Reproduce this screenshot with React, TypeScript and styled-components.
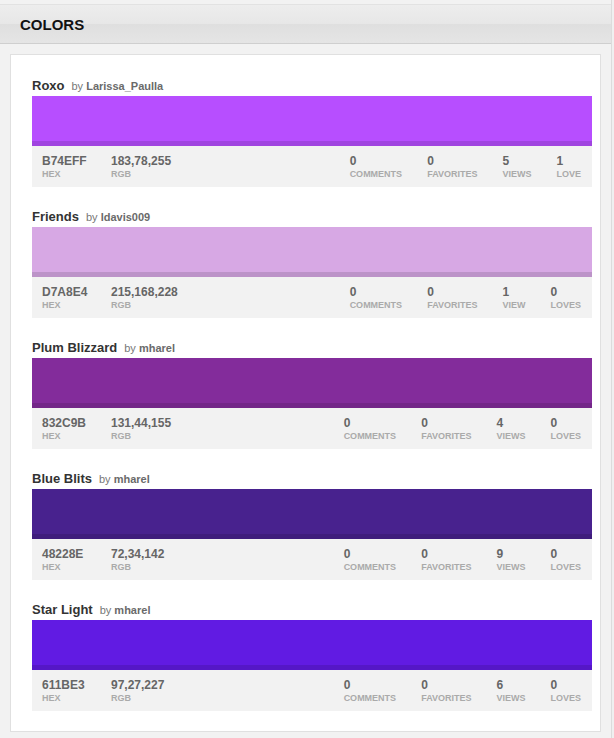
import React from 'react';
import styled, { createGlobalStyle } from 'styled-components';

interface Palette {
  title: string;
  user: string;
  hex: string;
  rgb: string;
  comments: number;
  favorites: number;
  views: number;
  loves: number;
}

const palettes: Palette[] = [
  { title: 'Roxo', user: 'Larissa_Paulla', hex: 'B74EFF', rgb: '183,78,255', comments: 0, favorites: 0, views: 5, loves: 1 },
  { title: 'Friends', user: 'ldavis009', hex: 'D7A8E4', rgb: '215,168,228', comments: 0, favorites: 0, views: 1, loves: 0 },
  { title: 'Plum Blizzard', user: 'mharel', hex: '832C9B', rgb: '131,44,155', comments: 0, favorites: 0, views: 4, loves: 0 },
  { title: 'Blue Blits', user: 'mharel', hex: '48228E', rgb: '72,34,142', comments: 0, favorites: 0, views: 9, loves: 0 },
  { title: 'Star Light', user: 'mharel', hex: '611BE3', rgb: '97,27,227', comments: 0, favorites: 0, views: 6, loves: 0 },
];

const plural = (n: number, word: string) => (n === 1 ? word : `${word}s`);

const GlobalStyle = createGlobalStyle`
  body {
    margin: 0;
    background: #f0f0f0;
    font-family: "Liberation Sans", Arial, sans-serif;
  }
`;

const Page = styled.div`
  width: 612px;
  min-height: 738px;
  padding-top: 4px;
  box-sizing: border-box;
  border-right: 1px solid #dcdcdc;
  background: #f2f2f2;
`;

const Header = styled.div`
  height: 40px;
  display: flex;
  align-items: center;
  padding-left: 20px;
  border-top: 1px solid #e2e2e2;
  border-bottom: 1px solid #cfcfcf;
  background: linear-gradient(to bottom, #ededed 0%, #e7e7e7 50%, #dfdfdf 51%, #e5e5e5 100%);
  box-sizing: border-box;
`;

const HeaderTitle = styled.h2`
  margin: 0;
  font-size: 15px;
  font-weight: bold;
  color: #111;
`;

const Panel = styled.div`
  margin: 10px 10px 0 10px;
  background: #fff;
  border: 1px solid #e0e0e0;
  padding: 23px 8px 20px 21px;
  display: flex;
  flex-direction: column;
  gap: 22px;
`;

const Card = styled.div`
  width: 560px;
`;

const TitleRow = styled.div`
  display: flex;
  align-items: baseline;
  gap: 7px;
  height: 18px;
`;

const Title = styled.span`
  font-size: 13px;
  font-weight: bold;
  color: #333;
`;

const By = styled.span`
  font-size: 11px;
  color: #777;

  b {
    font-weight: bold;
    color: #6a6a6a;
  }
`;

const Swatch = styled.div<{ $color: string }>`
  height: 50px;
  box-sizing: border-box;
  background: ${({ $color }) => $color};
  border-bottom: 5px solid rgba(0, 0, 0, 0.12);
`;

const Stats = styled.div`
  height: 41px;
  background: #f2f2f2;
  display: flex;
  align-items: center;
  padding: 0 11px 0 10px;
`;

const Stat = styled.div<{ $width?: number; $gap?: number }>`
  display: flex;
  flex-direction: column;
  gap: 1px;
  ${({ $width }) => ($width ? `width: ${$width}px;` : '')}
  ${({ $gap }) => ($gap ? `margin-left: ${$gap}px;` : '')}
`;

const Value = styled.span`
  font-size: 12px;
  font-weight: bold;
  color: #666;
  line-height: 14px;
`;

const Label = styled.span`
  font-size: 9px;
  font-weight: bold;
  color: #aaa;
  text-transform: uppercase;
  line-height: 11px;
`;

const Spacer = styled.div`
  flex: 1;
`;

export default function App() {
  return (
    <>
      <GlobalStyle />
      <Page>
        <Header>
          <HeaderTitle>COLORS</HeaderTitle>
        </Header>
        <Panel>
          {palettes.map((p) => (
            <Card key={p.hex}>
              <TitleRow>
                <Title>{p.title}</Title>
                <By>
                  by <b>{p.user}</b>
                </By>
              </TitleRow>
              <Swatch $color={`#${p.hex}`} />
              <Stats>
                <Stat $width={69}>
                  <Value>{p.hex}</Value>
                  <Label>Hex</Label>
                </Stat>
                <Stat>
                  <Value>{p.rgb}</Value>
                  <Label>Rgb</Label>
                </Stat>
                <Spacer />
                <Stat>
                  <Value>{p.comments}</Value>
                  <Label>{plural(p.comments, 'Comment')}</Label>
                </Stat>
                <Stat $gap={25}>
                  <Value>{p.favorites}</Value>
                  <Label>{plural(p.favorites, 'Favorite')}</Label>
                </Stat>
                <Stat $gap={25}>
                  <Value>{p.views}</Value>
                  <Label>{plural(p.views, 'View')}</Label>
                </Stat>
                <Stat $gap={25}>
                  <Value>{p.loves}</Value>
                  <Label>{plural(p.loves, 'Love')}</Label>
                </Stat>
              </Stats>
            </Card>
          ))}
        </Panel>
      </Page>
    </>
  );
}
